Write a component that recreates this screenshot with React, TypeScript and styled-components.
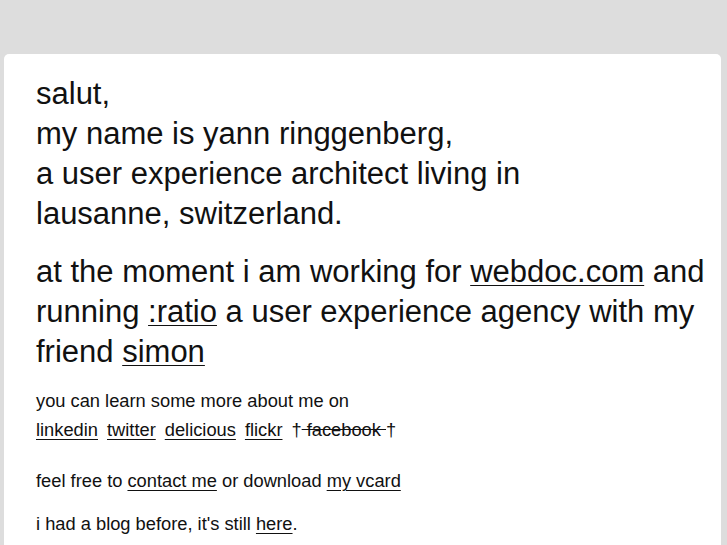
import React from "react";
import styled, { createGlobalStyle } from "styled-components";

const GlobalStyle = createGlobalStyle`
  html, body {
    margin: 0;
    padding: 0;
    background: #dddddd;
  }
  body {
    font-family: "Liberation Sans", Arial, sans-serif;
    color: #111111;
  }
`;

const Page = styled.div`
  padding: 54px 6px 0 4px;
`;

const Card = styled.div`
  background: #ffffff;
  border-radius: 5px 5px 0 0;
  padding: 20px 12px 0 32px;
  height: 491px;
  overflow: hidden;
`;

const Lead = styled.p<{ $gap?: number }>`
  font-size: 31px;
  line-height: 40px;
  margin: 0 0 ${(p) => p.$gap ?? 18}px 0;
`;

const Small = styled.p<{ $gap?: number }>`
  font-size: 18.3px;
  line-height: 29px;
  margin: 0 0 ${(p) => p.$gap ?? 0}px 0;
`;

const Link = styled.a`
  color: #111111;
  text-decoration: underline;
  text-underline-offset: 3px;
  text-decoration-thickness: 1px;
`;

const Links = styled.div`
  display: flex;
  gap: 9px;
  font-size: 18.3px;
  line-height: 29px;
  margin-bottom: 22px;
`;

const Gone = styled.span`
  white-space: pre;
  text-decoration: line-through;
`;

export default function App() {
  return (
    <Page>
      <GlobalStyle />
      <Card>
        <Lead>
          salut,
          <br />
          my name is yann ringgenberg,
          <br />
          a user experience architect living in
          <br />
          lausanne, switzerland.
        </Lead>
        <Lead $gap={14}>
          at the moment i am working for <Link href="#">webdoc.com</Link> and running{" "}
          <Link href="#">:ratio</Link> a user experience agency with my friend{" "}
          <Link href="#">simon</Link>
        </Lead>
        <Small>you can learn some more about me on</Small>
        <Links>
          <Link href="#">linkedin</Link>
          <Link href="#">twitter</Link>
          <Link href="#">delicious</Link>
          <Link href="#">flickr</Link>
          <span>
            †<Gone> facebook </Gone>†
          </span>
        </Links>
        <Small $gap={14}>
          feel free to <Link href="#">contact me</Link> or download <Link href="#">my vcard</Link>
        </Small>
        <Small>
          i had a blog before, it's still <Link href="#">here</Link>.
        </Small>
      </Card>
    </Page>
  );
}
